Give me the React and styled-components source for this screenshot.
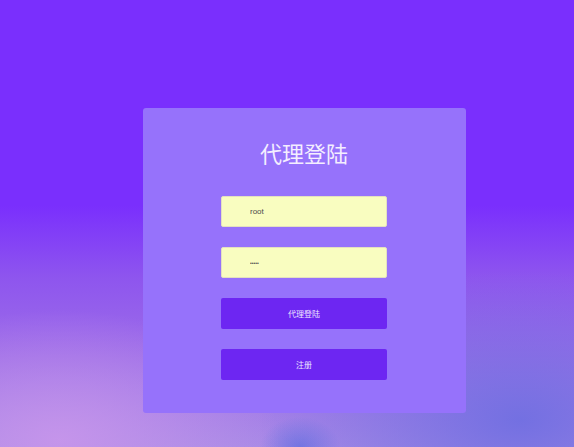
import React, { useState } from "react";
import styled, { createGlobalStyle } from "styled-components";

const GlobalStyle = createGlobalStyle`
  html, body {
    margin: 0;
    padding: 0;
  }
  body {
    font-family: "Noto Sans CJK SC", "Noto Sans", sans-serif;
  }
`;

const Page = styled.div`
  min-height: 100vh;
  box-sizing: border-box;
  padding: 108px 0 0 34px;
  display: flex;
  justify-content: center;
  align-items: flex-start;
  background:
    radial-gradient(ellipse 220px 130px at 60px 440px, rgba(200, 150, 235, 0.9), rgba(200, 150, 235, 0) 100%),
    radial-gradient(ellipse 260px 150px at 520px 420px, rgba(110, 110, 225, 0.9), rgba(110, 110, 225, 0) 100%),
    radial-gradient(ellipse 40px 30px at 300px 447px, rgba(110, 115, 225, 0.9), rgba(110, 115, 225, 0) 100%),
    linear-gradient(180deg, #7a2ffd 0%, #7a2ffd 46%, #8e55ee 62%, #9d6ee8 80%, #a88ae6 100%);
`;

const Card = styled.div`
  width: 323px;
  height: 305px;
  box-sizing: border-box;
  padding-top: 31px;
  background: #9672fb;
  border-radius: 3px;
  display: flex;
  flex-direction: column;
  align-items: center;
`;

const Title = styled.h1`
  margin: 0 0 31px;
  font-size: 22px;
  line-height: 26px;
  font-weight: 400;
  color: #f4eeff;
`;

const Form = styled.form`
  display: flex;
  flex-direction: column;
  gap: 20px;
  width: 166px;
`;

const Field = styled.input`
  height: 31px;
  width: 100%;
  box-sizing: border-box;
  border: 1px solid #e4e0c0;
  border-radius: 2px;
  background: #f9fdc0;
  padding: 0 0 0 28px;
  font-family: "Liberation Sans Narrow", "Liberation Sans", sans-serif;
  font-size: ${(p) => (p.type === "password" ? "5px" : "8px")};
  color: #4a4a4a;
  outline: none;
`;

const Button = styled.button`
  height: 31px;
  width: 100%;
  border: none;
  border-radius: 2px;
  background: #6d26f2;
  color: #ece4ff;
  font-family: "Noto Sans CJK SC", sans-serif;
  font-size: 8px;
  cursor: pointer;
`;

export default function App() {
  const [user, setUser] = useState("root");
  const [pass, setPass] = useState("admin");

  return (
    <>
      <GlobalStyle />
      <Page>
        <Card>
          <Title>代理登陆</Title>
          <Form onSubmit={(e) => e.preventDefault()}>
            <Field
              type="text"
              value={user}
              onChange={(e) => setUser(e.target.value)}
            />
            <Field
              type="password"
              value={pass}
              onChange={(e) => setPass(e.target.value)}
            />
            <Button type="submit">代理登陆</Button>
            <Button type="button">注册</Button>
          </Form>
        </Card>
      </Page>
    </>
  );
}
